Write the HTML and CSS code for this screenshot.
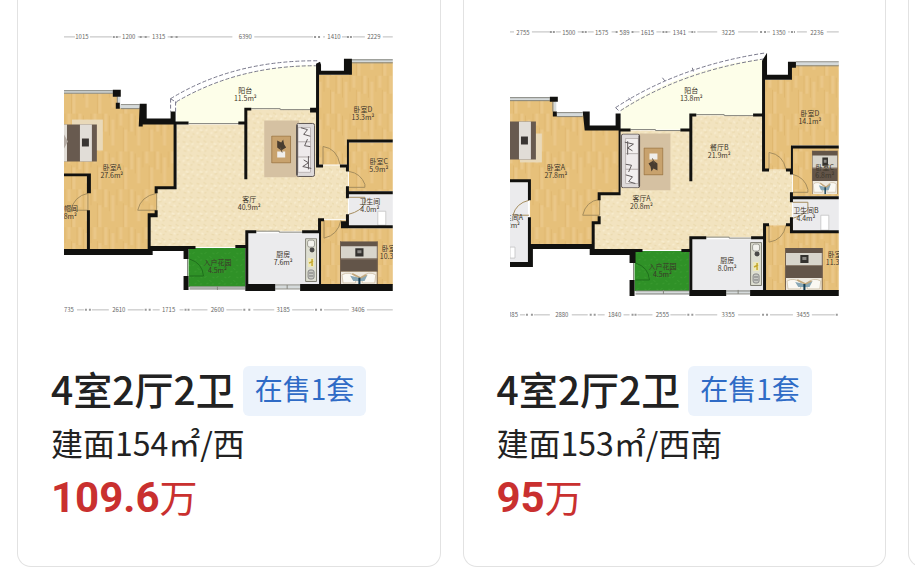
FILE: index.html
```html
<!DOCTYPE html>
<html lang="zh-CN">
<head>
<meta charset="utf-8">
<meta name="viewport" content="width=device-width, initial-scale=1">
<title>户型</title>
<link rel="stylesheet" href="styles.css">
</head>
<body>
<svg class="defs" width="0" height="0" aria-hidden="true">
  <defs>
    <pattern id="wood" width="26" height="38" patternUnits="userSpaceOnUse">
      <rect width="26" height="38" fill="#e6c07a"/>
      <path d="M2 0v18M9 6v26M17 0v12M22 16v22" stroke="#eac788" stroke-width="3"/>
      <path d="M5.500 2v20M13 0v16M19.500 14v24M25 0v18" stroke="#e0b870" stroke-width="1"/>
    </pattern>
    <pattern id="stone" width="14" height="14" patternUnits="userSpaceOnUse">
      <rect width="14" height="14" fill="#f2e3bf"/>
      <path d="M1 2l3 1M8 1l3 2M5 7l3-1M11 8l2 1M2 11l3 1M9 12l2-1" stroke="#e9d7aa" stroke-width="1"/>
      <path d="M4 4l3 1M1 8l2-1M10 5l2-1M6 10l2 1" stroke="#f8edcf" stroke-width="1.500"/>
    </pattern>
    <pattern id="grass" width="12" height="12" patternUnits="userSpaceOnUse">
      <rect width="12" height="12" fill="#2f9127"/>
      <path d="M1 3l2-2M6 5l2 2M9 2l2 1M3 9l2-1M9 10l1-2" stroke="#3a9b30" stroke-width="1"/>
    </pattern>
    <symbol id="bed" viewBox="0 0 37 43" preserveAspectRatio="none">
      <path d="M0 0h37v30H0z" fill="#635549"/>
      <path d="M0 5h37v12H0z" fill="#d8d5cc"/>
      <path d="M0 17h37v1H0z" fill="#8a7b6d"/>
      <path d="M15 7h8v8h-8z" fill="#34322f"/><path d="M17 9h4v3h-4z" fill="#8b8985"/>
      <path d="M1 30h35v13H1z" fill="#eee9df"/>
      <path d="M2 33q7-4 14 2l-1 6H3zM35 33q-7-4-14 2l1 6h12z" fill="#faf8f2" stroke="#c8b89c" stroke-width=".7"/>
      <path d="M10 34l9 2 8-3-3 6H13z" fill="#88a7b5"/><path d="M12 32l8 4 6-3" fill="none" stroke="#c2a77b" stroke-width="1.500"/>
      <path d="M19 36v7" stroke="#173f54" stroke-width="2"/>
      <path d="M.5 0v43M36.500 0v43" stroke="#76624e" stroke-width="1"/>
    </symbol>
    <symbol id="sofa" viewBox="0 0 20 57">
      <rect x=".5" y=".5" width="19" height="56" rx="2" fill="#dedada" stroke="#58504e"/>
      <rect x="2" y="5" width="13" height="15" fill="#f2efef" stroke="#aaa2a1" stroke-width=".7"/>
      <rect x="2" y="20" width="13" height="16" fill="#eeeaeb" stroke="#aaa2a1" stroke-width=".7"/>
      <rect x="2" y="36" width="13" height="16" fill="#f2efef" stroke="#aaa2a1" stroke-width=".7"/>
      <path d="M5 5l7 2-4 5 7 2M12 17l-3 7 6 1M8 39l5 3-6 4 9 2M13 35v14" fill="none" stroke="#5c5657" stroke-width="1"/>
      <path d="M1 2v53" stroke="#4c4442" stroke-width="1.500"/>
    </symbol>
    <symbol id="table" viewBox="0 0 20 28">
      <path d="M.5.5h19v27H.5z" fill="#c8a26d" stroke="#9d7849"/>
      <path d="M6 16h8v6H6z" fill="#f0eeeb"/>
      <path d="M6 5l4 2 2-3 1 5 2 3-5 3-4-3z" fill="#493d30"/><path d="M9 12l2 5" stroke="#65543e"/>
    </symbol>
    <symbol id="stove" viewBox="0 0 12 44">
      <path d="M.5.5h11v43H.5z" fill="#dedfd2" stroke="#7c7b70"/>
      <rect x="2.500" y="2" width="7" height="7" rx="2" fill="#f2f2ed" stroke="#8a8a83" stroke-width=".8"/>
      <circle cx="7" cy="12" r="2.500" fill="#4a4a49"/>
      <path d="M3 20h6v9H3z" fill="#eee9b9"/><path d="M7 21v7M4 25l4-2" stroke="#c5a92f" stroke-width="1.500"/>
      <rect x="3" y="32" width="6" height="9" rx="2" fill="#c9cac4" stroke="#888"/><path d="M4 35h4M4 38h4" stroke="#777"/>
    </symbol>
  </defs>
</svg>

<main class="strip">
  <article class="card">
    <svg class="plan" viewBox="64 9 330 330" role="img" aria-label="户型图">
      <g class="dims">
        <path d="M64 37H75M90 37H112M118 37H121M138 37H150M168 37H233M255 37H314M324 37H326M343 37H348M354 37H366M384 37H394"/>
        <path d="M77 311H84M92 311H109M128 311H144M153 311H160M180 311H184M192 311H208M227 311H243M254 311H275M293 311H315M325 311H350M368 311H394"/>
        <path class="ticks" d="M113 37h5M140 37h3M145 37h3M171 37h3M176 37h3M315 37h3M319 37h3M348 37h5M85 311h3M89 311h3M145 311h3M149 311h3M185 311h6M244 311h3M249 311h3M316 311h3M321 311h3"/>
        <text x="82" y="39">1015</text><text x="129" y="39">1200</text><text x="159" y="39">1315</text><text x="246" y="39">6390</text><text x="335" y="39">1410</text><text x="375" y="39">2229</text>
        <text x="69" y="313">735</text><text x="119" y="313">2610</text><text x="169" y="313">1715</text><text x="218" y="313">2600</text><text x="284" y="313">3185</text><text x="359" y="313">3406</text>
      </g>
      <path fill="#fdfee9" d="M177 124V102Q240 65 318 65V110H247V124z"/>
      <path fill="url(#wood)" d="M64 93H118V107H144V123H175V188H157V216H150V251H64z"/>
      <path fill="url(#stone)" d="M177 125H247V110H317V166H349V220H320V232H247V248H150V216H157V189H177z"/>
      <path fill="url(#wood)" d="M320 75H350V62H394V141H349V165H320zM350 143H394V192H350zM321 221H349V229H394V286H321z"/>
      <path fill="#ebebed" d="M350 195H394V226H350zM249 234H320V286H249z"/>
      <path fill="url(#grass)" d="M189 249H246V288H189z"/>
      <path class="rug" d="M265 121H300V178H265z"/>
      <use href="#table" x="272" y="136" width="20" height="28"/>
      <use href="#sofa" x="297" y="122" width="19" height="57"/>
      <path fill="#e9d9b9" d="M72 120H103V151H72z"/>
      <path fill="#685a4f" d="M64 125H97V162H64z"/><path fill="#e1ddd7" d="M64 125H67V162H64zM80 125H92V162H80z"/><path fill="#b3aaa2" d="M64 135l4 7-4 7z"/><path fill="#393532" d="M82 139H89V147H82z"/>
      <use href="#stove" x="306" y="239" width="12" height="44"/>
      <use href="#bed" x="341" y="242" width="38" height="44"/>
      <path d="M379 212H387V226H379z" fill="#fff" stroke="#bbb" stroke-width=".7"/>
      <path class="glass" d="M64 92H114M119 97V105M120 107H140M353 61H394M190 289H246M276 288H301"/>
      <path class="rail" d="M64 91H113M117.500 97V104M121 105H140M64 93.500H113M121 109H140M189 124H240M252 109H281V110H312M257 232H280V233H303M353 60H394M353 63H394M190 288H246M190 290H246M218 287v4M276 286H301M276 290H301M288 286v4M188 260V277"/>
      <path class="door" d="M157 194Q141 197 138 211H157zM88 194Q74 197 71 211H88zM324 165V147Q338 149 341 165M350 172Q362 174 366 185V188H350M350 198H366V204Q362 212 350 215M325 221V239Q339 236 342 221"/>
      <path class="gate" d="M190 260q13 4 14 17h-14"/>
      <path class="dash" d="M171 99Q235 60 320 61M177 102Q240 65 320 66M171 99V112M176 102V112M171 99l6 4"/>
      <path class="wall" d="M113 90h8v7h-8zM116 103h4v6h-4zM140 104h7v15h24v-7h5v10h13v3h-12v65h-19v4h-3v-7h19v-62h-31v2h-4zM239 122h6v-14h7v3h-4v69h-3v-55h-6zM311 108h6V64l4-2 1 3v6h23v-12h8v16h-33v90h4v3h-7v-55h-6zM341 165h7v-25h46v3h-44v29h-3v-4h-6zM347 187h3v5h44v3h-44v4h-3zM347 215h3v11h44v3h-52v-7h5zM319 219h6v3h-3v63h72v7h-93v-7h19v-51h-17v-3h16zM246 231h11v3h-8v51h27v7h-30v-43h-10v-3h10zM64 174h27v20h-4v-17H64zM87 211h3v39h58v-36h7v-3h3v7h-7v29h45v3h-7v10h-5v-8h-31v4H64v-6h23zM184 277h5v14h-5z"/>
      <g class="labels">
        <text x="246" y="93">阳台</text><text x="246" y="101">11.5m²</text>
        <text x="364" y="112">卧室D</text><text x="364" y="120">13.3m²</text>
        <text x="112" y="171">卧室A</text><text x="112" y="179">27.6m²</text>
        <text x="380" y="165">卧室C</text><text x="380" y="173">5.9m²</text>
        <text x="250" y="203">客厅</text><text x="250" y="211">40.9m²</text>
        <text x="371" y="205">卫生间</text><text x="371" y="213">4.0m²</text>
        <text x="218" y="266">入户花园</text><text x="218" y="274">4.5m²</text>
        <text x="284" y="258">厨房</text><text x="284" y="266">7.6m²</text>
        <text class="cut-right" x="383" y="252">卧室B</text><text class="cut-right" x="381" y="260">10.3m²</text>
        <text class="cut-left" x="78" y="212">衣帽间</text><text class="cut-left" x="77" y="220">3.8m²</text>
      </g>
    </svg>
    <div class="info">
      <h2 class="title"><span class="layout">4室2厅2卫</span><span class="badge">在售1套</span></h2>
      <p class="area">建面154㎡/西</p>
      <p class="price"><strong>109.6</strong>万</p>
    </div>
  </article>

  <article class="card">
    <svg class="plan" viewBox="510 9 330 330" role="img" aria-label="户型图">
      <g class="dims">
        <path d="M510 32H514M532 32H550M556 32H561M578 32H582M588 32H594M612 32H616M634 32H640M657 32H662M668 32H671M689 32H692M698 32H718M739 32H759M768 32H771M789 32H791M798 32H808M828 32H840"/>
        <path d="M520 316H525M534 316H550M572 316H588M598 316H605M624 316H630M638 316H653M671 316H687M696 316H718M739 316H761M771 316H794M813 316H836"/>
        <path class="ticks" d="M550 32h5M582 32h5M616 32h3M632 32h3M663 32h5M692 32h4M761 32h3M765 32h3M792 32h4M526 316h3M531 316h3M590 316h3M594 316h3M632 316h5M688 316h3M692 316h3M763 316h3M767 316h3M837 316h3"/>
        <text x="523" y="35">2755</text><text x="569" y="35">1500</text><text x="602" y="35">1575</text><text x="625" y="35">589</text><text x="648" y="35">1615</text><text x="680" y="35">1341</text><text x="729" y="35">3225</text><text x="780" y="35">1350</text><text x="818" y="35">2236</text>
        <text x="513" y="318">385</text><text x="562" y="318">2880</text><text x="615" y="318">1840</text><text x="663" y="318">2555</text><text x="729" y="318">3355</text><text x="804" y="318">3455</text>
      </g>
      <path fill="#fdfee9" d="M621 130V110Q683 68 764 59V116H692V130z"/>
      <path fill="url(#wood)" d="M510 99H555V115H587V128H620V194H600V223H593V246H530V181H510z"/>
      <path fill="url(#stone)" d="M621 131H692V116H764V170H793V226H765V238H691V251H594V224H600V195H621z"/>
      <path fill="url(#wood)" d="M766 80H792V64H840V146H793V170H766zM794 148H840V197H794zM767 226H794V233H840V292H767z"/>
      <path fill="#ebebed" d="M794 200H840V231H794zM692 240H765V292H692zM510 183H528V263H510z"/>
      <path fill="url(#grass)" d="M635 252H690V292H635z"/>
      <path class="rug" d="M640 134H671V191H640z"/>
      <use href="#table" x="644" y="148" width="20" height="28" transform="rotate(180 654 162)"/>
      <use href="#sofa" x="621" y="134" width="20" height="55" transform="rotate(180 631 161.500)"/>
      <path fill="#e9d9b9" d="M520 134H542V163H520z"/>
      <path fill="#685a4f" d="M510 122H536V160H510z"/><path fill="#e1ddd7" d="M519 122H531V160H519z"/><path fill="#393532" d="M521 137H528V145H521z"/>
      <use href="#stove" x="751" y="243" width="12" height="44"/>
      <use href="#bed" x="786" y="249" width="38" height="43"/>
      <use href="#bed" x="813" y="151" width="26" height="44"/>
      <path d="M822 216H830V231H822zM510 248H515V259H510z" fill="#fff" stroke="#bbb" stroke-width=".7"/>
      <path class="glass" d="M510 99H550M555 102V112M557 115H583M797 64H840M636 294H690M727 293H751"/>
      <path class="rail" d="M510 98H550M510 101H550M553 102V112M557 113H583M557 117H583M631 130H656V131H681M697 115H725V116H754M707 238H730V239H752M797 62H840M797 66H840M636 292H690M636 295H690M664 291v4M727 292H751M727 295H751M739 291v4M634 264V281"/>
      <path class="door" d="M600 200Q586 202 583 216H600zM529 201Q516 204 513 216H529M770 170V153Q784 155 787 170M794 175Q806 178 809 190V193H794M794 203H809V210Q805 216 794 219M770 226V243Q784 241 787 226"/>
      <path class="gate" d="M636 264q13 4 14 17h-14"/>
      <path class="dash" d="M616 108Q680 66 767 53M621 111Q683 71 766 59M616 108l4 4M629 98l3 4M663 78l3 4M693 68l1 4"/>
      <path class="wall" d="M550 97h8v5h-8zM553 112h4v5h-4zM583 112h7v14h26v-12h5v15h10v3h-10v64h-20v5h-3v-8h21v-62h-34zM681 129h9v-15h7v3h-4v65h-3v-50h-9zM754 114h9V61l5-8v22h21V62h8v6h-4v12h-27v89h4v3h-7v-55h-9zM787 169h5v-23h48v3h-46v26h-3v-3h-4zM791 193h3v4h46v3h-46v3h-3zM791 218h3v13h46v3h-49v-7h-4v-3h4zM764 224h6v3h-3v64h73v6h-89v-6h13v-51h-12v-3h12zM690 237h17v3h-14v51h34v6h-37v-44h-8v-3h8zM510 180h21v21h-3v-18h-18zM528 218h3v27h61v-23h6v-5h3v8h-6v25h48v3h-7v11h-6v-8h-40v-6h-57v18h-23v-5h18zM630 281h5v16h-5z"/>
      <g class="labels">
        <text x="692" y="93">阳台</text><text x="692" y="101">13.8m²</text>
        <text x="811" y="116">卧室D</text><text x="811" y="124">14.1m²</text>
        <text x="556" y="171">卧室A</text><text x="556" y="179">27.8m²</text>
        <text x="720" y="151">餐厅B</text><text x="720" y="159">21.9m²</text>
        <text x="642" y="202">客厅A</text><text x="642" y="210">20.8m²</text>
        <text x="826" y="171">卧室C</text><text x="826" y="179">6.8m²</text>
        <text x="807" y="214">卫生间B</text><text x="807" y="222">4.4m²</text>
        <text x="663" y="270">入户花园</text><text x="663" y="278">4.5m²</text>
        <text x="728" y="264">厨房</text><text x="728" y="272">8.0m²</text>
        <text class="cut-right" x="829" y="258">卧室B</text><text class="cut-right" x="827" y="266">11.3m²</text>
        <text class="cut-left" x="523" y="221">卫生间A</text><text class="cut-left" x="520" y="229">4.2m²</text>
      </g>
    </svg>
    <div class="info">
      <h2 class="title"><span class="layout">4室2厅2卫</span><span class="badge">在售1套</span></h2>
      <p class="area">建面153㎡/西南</p>
      <p class="price"><strong>95</strong>万</p>
    </div>
  </article>

  <article class="card"></article>
</main>
</body>
</html>
```
FILE: styles.css
```css
* {
  box-sizing: border-box;
}

body {
  margin: 0;
  background: #fff;
  color: #222;
  font-family: "Noto Sans CJK SC", sans-serif;
}

.defs {
  position: absolute;
}

.strip {
  display: flex;
  gap: 22px;
  padding: 0 0 10px 17px;
  overflow: hidden;
}

.card {
  flex: none;
  width: clamp(320px, calc(50vw - 34px), 480px);
  padding-top: 9px;
  border: 1px solid #e2e2e2;
  border-top: 0;
  border-radius: 0 0 14px 14px;
}

.plan {
  display: block;
  width: 78%;
  margin: 0 auto;
}

.info {
  padding: 28px 0 40px 33px;
}

.title {
  display: flex;
  align-items: center;
  gap: 8px;
  margin: 0;
  font-size: 39px;
  font-weight: 500;
  line-height: 44px;
  white-space: nowrap;
}

.layout {
  padding-bottom: 6px;
}

.badge {
  padding: 0 12px 6px;
  border-radius: 6px;
  background: #ecf3fc;
  color: #2f6bc6;
  font-size: 28px;
  font-weight: 400;
}

.area {
  margin: 0;
  padding-bottom: 4px;
  font-size: 32px;
  line-height: 52px;
  white-space: nowrap;
}

.price {
  margin: 0;
  padding-bottom: 4px;
  color: #c9302f;
  font-size: 38px;
  line-height: 48px;
  white-space: nowrap;
}

.price strong {
  font-family: Roboto, sans-serif;
  font-size: 42px;
  font-weight: 700;
}

.dims path {
  fill: none;
  stroke: #bbb;
  stroke-width: 1;
}

.dims .ticks {
  stroke: #999;
  stroke-width: 2;
  stroke-dasharray: 2 1;
}

.dims text {
  fill: #666;
  font-size: 6px;
  text-anchor: middle;
}

.labels text {
  fill: #3c352a;
  font-size: 7px;
  text-anchor: middle;
}

.labels .cut-right {
  text-anchor: start;
}

.labels .cut-left {
  text-anchor: end;
}

.wall {
  fill: #11110f;
}

.rug {
  fill: #d5c1a2;
}

.glass {
  fill: none;
  stroke: #d5dadb;
  stroke-width: 3;
}

.rail,
.door,
.gate,
.dash {
  fill: none;
  stroke: #85857d;
  stroke-width: 1;
}

.door {
  stroke: #a58d5d;
}

.gate {
  stroke: #1f6e1c;
}

.dash {
  stroke: #77778a;
  stroke-dasharray: 4 2;
}
```
